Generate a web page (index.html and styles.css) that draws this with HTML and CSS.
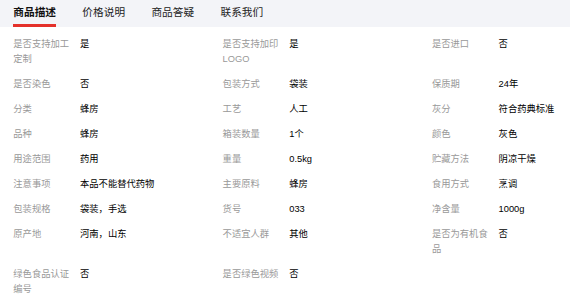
FILE: index.html
```html
<!DOCTYPE html>
<html lang="zh">
<head>
<meta charset="utf-8">
<link rel="stylesheet" href="styles.css">
</head>
<body>
<div class="tabs">
  <div class="tab active">商品描述</div>
  <div class="tab">价格说明</div>
  <div class="tab">商品答疑</div>
  <div class="tab">联系我们</div>
</div>
<div class="attrs">
  <div class="item"><span class="k">是否支持加工定制</span><span class="v">是</span></div>
  <div class="item"><span class="k">是否支持加印LOGO</span><span class="v">是</span></div>
  <div class="item"><span class="k">是否进口</span><span class="v">否</span></div>

  <div class="item"><span class="k">是否染色</span><span class="v">否</span></div>
  <div class="item"><span class="k">包装方式</span><span class="v">袋装</span></div>
  <div class="item"><span class="k">保质期</span><span class="v">24年</span></div>

  <div class="item"><span class="k">分类</span><span class="v">蜂房</span></div>
  <div class="item"><span class="k">工艺</span><span class="v">人工</span></div>
  <div class="item"><span class="k">灰分</span><span class="v">符合药典标准</span></div>

  <div class="item"><span class="k">品种</span><span class="v">蜂房</span></div>
  <div class="item"><span class="k">箱装数量</span><span class="v">1个</span></div>
  <div class="item"><span class="k">颜色</span><span class="v">灰色</span></div>

  <div class="item"><span class="k">用途范围</span><span class="v">药用</span></div>
  <div class="item"><span class="k">重量</span><span class="v">0.5kg</span></div>
  <div class="item"><span class="k">贮藏方法</span><span class="v">阴凉干燥</span></div>

  <div class="item"><span class="k">注意事项</span><span class="v">本品不能替代药物</span></div>
  <div class="item"><span class="k">主要原料</span><span class="v">蜂房</span></div>
  <div class="item"><span class="k">食用方式</span><span class="v">烹调</span></div>

  <div class="item"><span class="k">包装规格</span><span class="v">袋装，手选</span></div>
  <div class="item"><span class="k">货号</span><span class="v">033</span></div>
  <div class="item"><span class="k">净含量</span><span class="v">1000g</span></div>

  <div class="item"><span class="k">原产地</span><span class="v">河南，山东</span></div>
  <div class="item"><span class="k">不适宜人群</span><span class="v">其他</span></div>
  <div class="item"><span class="k">是否为有机食品</span><span class="v">否</span></div>

  <div class="item"><span class="k">绿色食品认证编号</span><span class="v">否</span></div>
  <div class="item"><span class="k">是否绿色视频</span><span class="v">否</span></div>
</div>
</body>
</html>
```
FILE: styles.css
```css
html, body {
  margin: 0;
  padding: 0;
  background: #fff;
  overflow: hidden;
}
body {
  font-family: "Liberation Sans", "Noto Sans CJK SC", sans-serif;
  width: 570px;
  height: 308px;
}
.tabs {
  display: flex;
  gap: 26.3px;
  padding-left: 13.3px;
  background: #f3f4f8;
  height: 27px;
}
.tab {
  font-size: 10.7px;
  line-height: 24px;
  height: 24px;
  color: #222;
  border-bottom: 3px solid transparent;
  white-space: nowrap;
}
.tab.active {
  font-weight: bold;
  color: #111;
  border-bottom-color: #e4312b;
}
.attrs {
  display: grid;
  grid-template-columns: 209.3px 209.3px 130px;
  row-gap: 10px;
  padding: 10px 0 0 13.3px;
}
.item {
  display: flex;
  font-size: 9.3px;
  line-height: 15px;
}
.k {
  flex: 0 0 60px;
  margin-right: 6.7px;
  color: #999;
  word-break: break-all;
}
.v {
  color: #000;
}
```
